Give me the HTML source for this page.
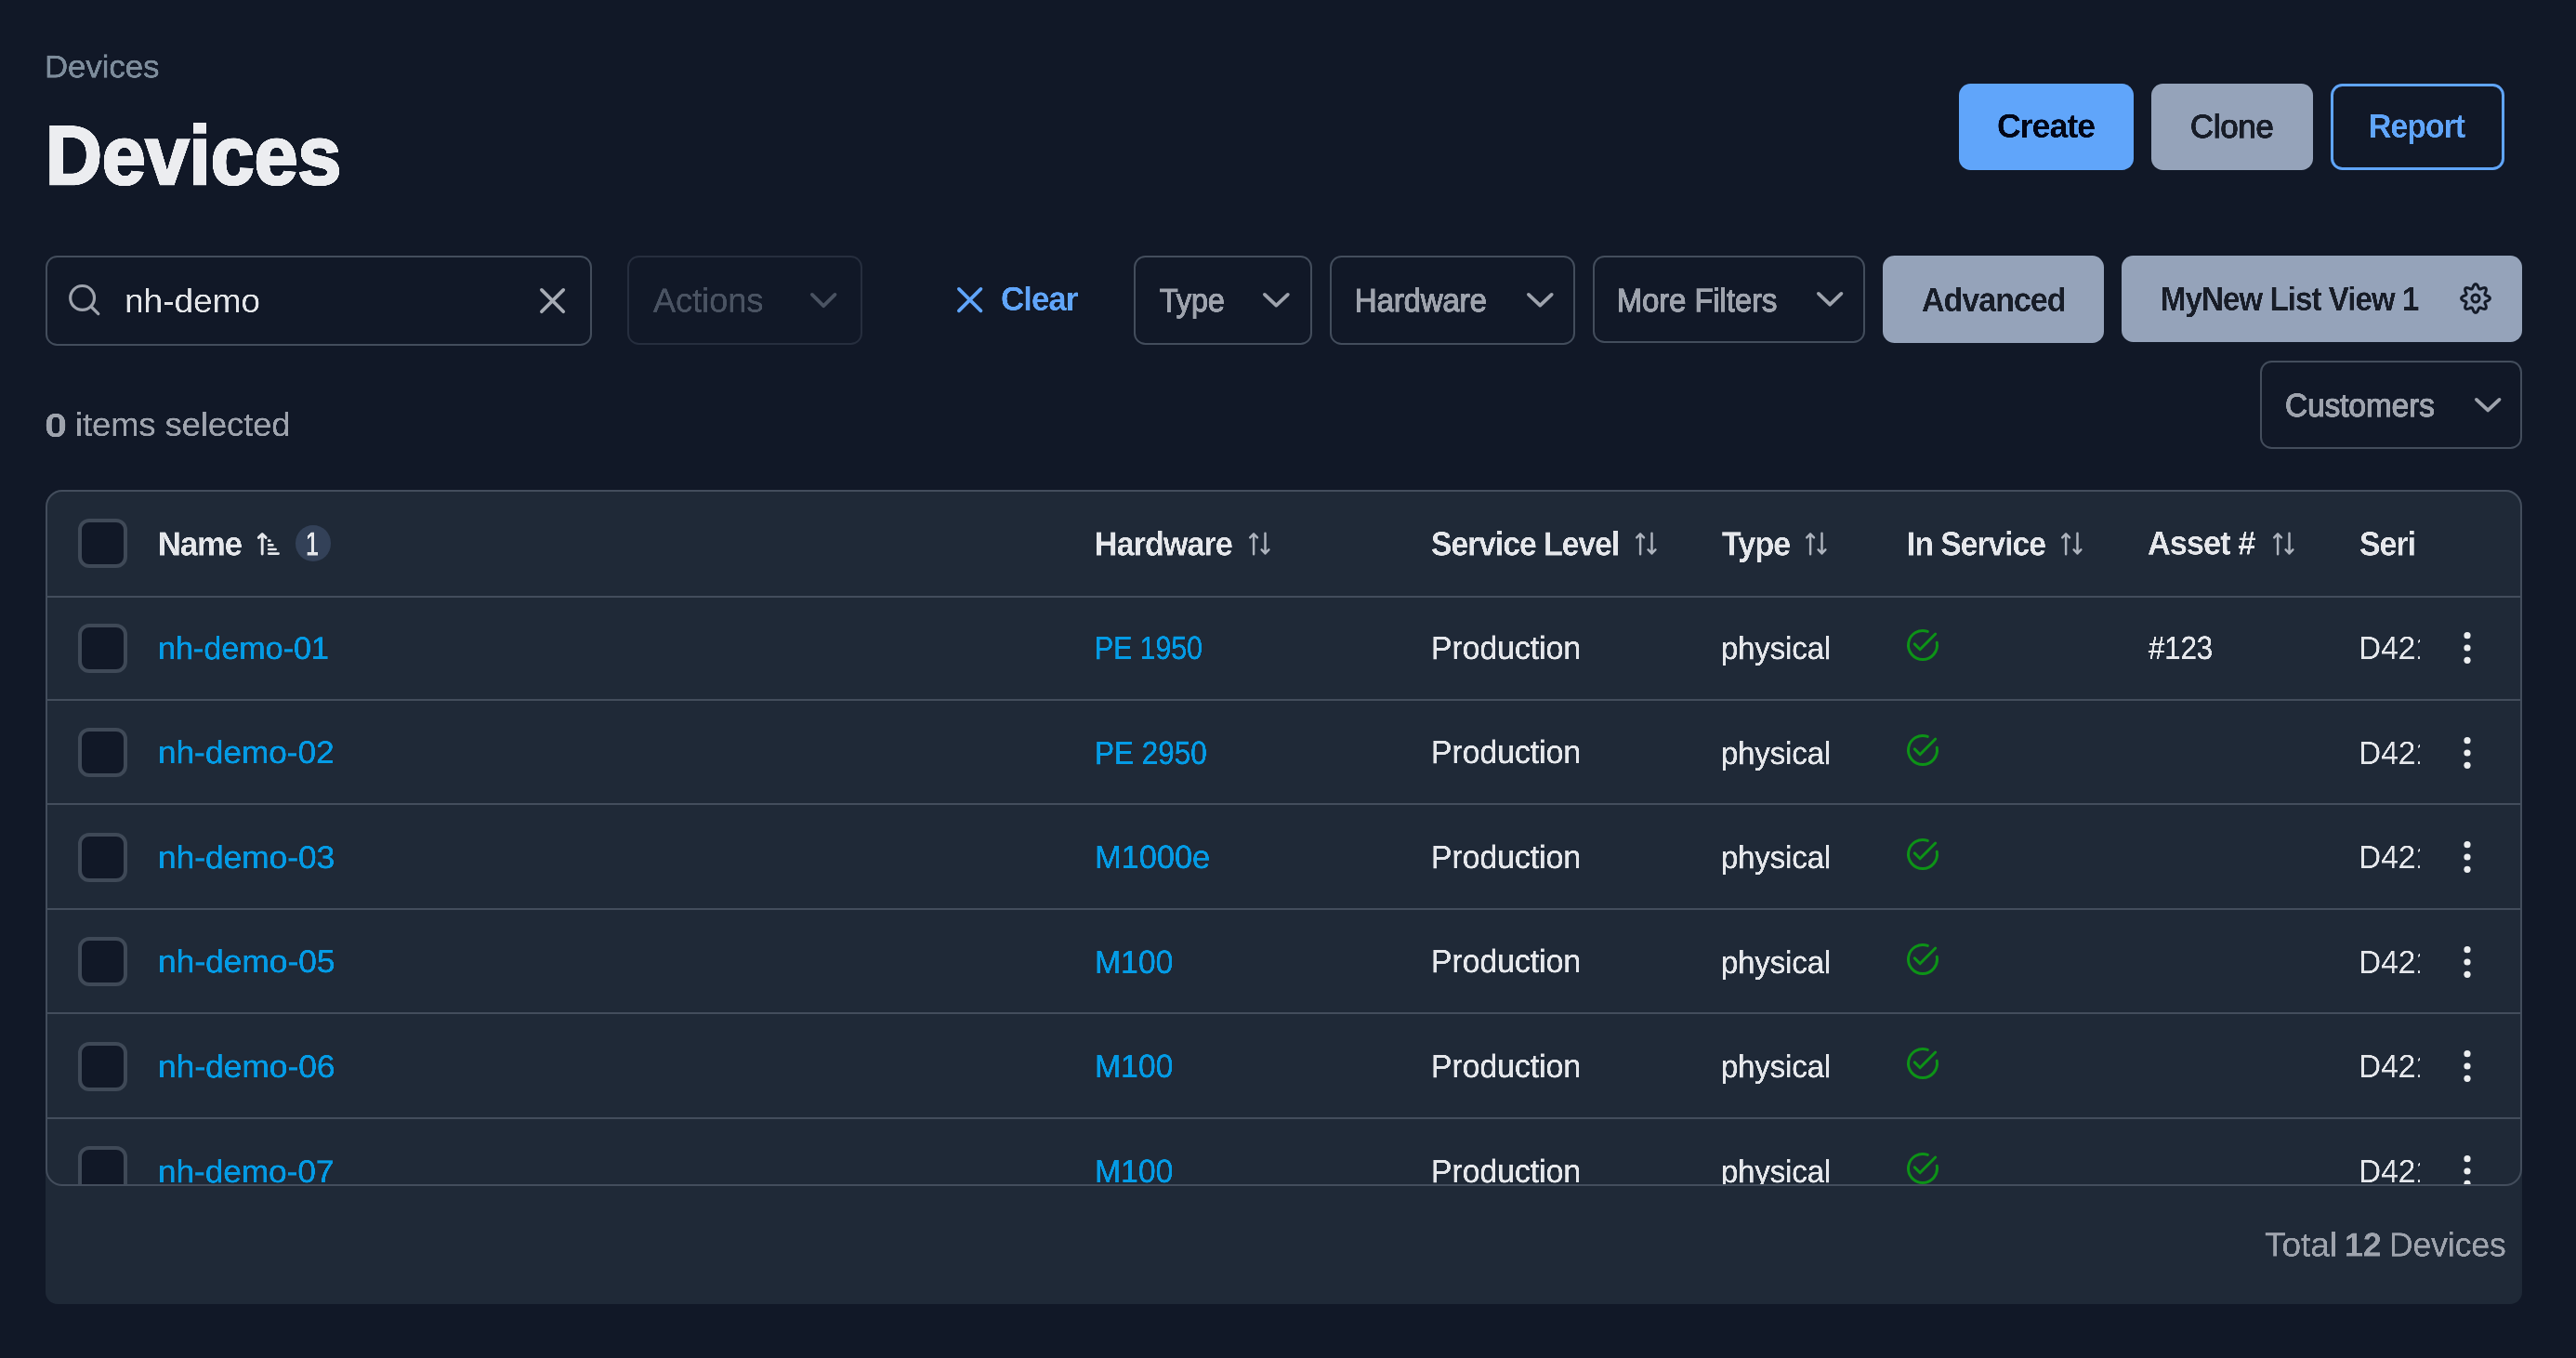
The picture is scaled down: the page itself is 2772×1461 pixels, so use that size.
<!DOCTYPE html>
<html lang="en"><head><meta charset="utf-8"><title>Devices</title>
<style>
html,body{margin:0;padding:0}
body{width:2772px;height:1461px;overflow:hidden;background:#111827;font-family:"Liberation Sans",sans-serif;position:relative}
.b{position:absolute;box-sizing:border-box;border-radius:12.5px;margin:0;padding:0;border:0;background:none;font:inherit;color:inherit;appearance:none;-webkit-appearance:none;display:block;overflow:visible;text-align:left}
h1,p,nav,header{margin:0;padding:0;font-size:inherit;font-weight:inherit}
.t{position:absolute;white-space:nowrap;transform-origin:0 0;display:block;will-change:transform}
.i{position:absolute;display:block;overflow:visible}
.dd{border:2px solid #434d5c}
.panel{position:absolute;left:49px;top:527px;width:2665px;height:876px;background:#1f2937;border-radius:18px 18px 13px 13px}
.tbl{position:absolute;left:0;top:0;width:2665px;height:749px;box-sizing:border-box;border:2px solid #434d5c;border-radius:18px;overflow:hidden}
.row{position:absolute;left:0;width:2661px;box-sizing:border-box;border-bottom:2px solid #434d5c}
.cb{position:absolute;box-sizing:border-box;width:53px;height:53px;border:4px solid #3f4957;border-radius:12px;background:#111827}
.clip{position:absolute;overflow:hidden}
</style></head><body>
<header>
<nav aria-label="Breadcrumb"><span class="t" style="left:48.00px;top:51.00px;font-size:135.5px;line-height:164px;font-weight:400;color:#7d8c9b;-webkit-text-stroke:2.40px #7d8c9b;transform:scale(0.25608,0.25)">Devices</span></nav>
<h1><span class="t" style="left:49.00px;top:113.00px;font-size:357.6px;line-height:432px;font-weight:700;color:#ecedf0;-webkit-text-stroke:11.20px #ecedf0;transform:scale(0.23536,0.25)">Devices</span></h1>
<div class="actions">
<button class="b" type="button" style="left:2108px;top:90px;width:188px;height:93px;background:#60a5fa"><span class="t" style="left:41.00px;top:24.00px;font-size:142.4px;line-height:172px;font-weight:700;color:#020617;letter-spacing:-3.99px;transform:scale(0.25047,0.25)">Create</span></button>
<button class="b" type="button" style="left:2315px;top:90px;width:174px;height:93px;background:#95a3ba"><span class="t" style="left:42.00px;top:25.00px;font-size:138.4px;line-height:168px;font-weight:400;color:#181d28;-webkit-text-stroke:4.80px #181d28;transform:scale(0.24798,0.25)">Clone</span></button>
<button class="b" type="button" style="left:2508px;top:90px;width:187px;height:93px;border:3px solid #60a5fa"><span class="t" style="left:38.00px;top:21.00px;font-size:142.4px;line-height:172px;font-weight:700;color:#60a5fa;letter-spacing:-3.99px;transform:scale(0.23701,0.25)">Report</span></button>
</div></header>
<div class="toolbar">
<label class="b dd"  style="left:49px;top:275px;width:588px;height:97px;"><svg class="i" style="left:19.80px;top:26.20px" width="40" height="40" viewBox="-3 -3 40 40"><g fill="none" stroke="#9ea3ad" stroke-width="3.2" stroke-linecap="round"><circle cx="14.6" cy="14.4" r="12.9"/><path d="M24.2 24 L31.8 31.6"/></g></svg><span class="t" style="left:83.00px;top:25.00px;font-size:141.6px;line-height:172px;font-weight:400;color:#e3e5e8;transform:scale(0.26120,0.25)">nh-demo</span><svg class="i" style="left:526.20px;top:28.90px" width="35.10" height="35.10" viewBox="-4 -4 35.10 35.10"><path d="M1.85 1.85 L25.25 25.25 M25.25 1.85 L1.85 25.25" fill="none" stroke="#a6abb4" stroke-width="3.7" stroke-linecap="round"/></svg></label>
<button class="b" type="button" disabled style="left:675px;top:275px;width:253px;height:96px;border:2px solid #262e3e"><span class="t" style="left:26.00px;top:24.00px;font-size:144.8px;line-height:176px;font-weight:400;color:#4a5362;-webkit-text-stroke:1.60px #4a5362;transform:scale(0.24930,0.25)">Actions</span><svg class="i" style="left:190.50px;top:33.70px" width="36.40" height="24.80" viewBox="-4 -4 36.40 24.80"><path d="M1.90 1.90 L14.20 14.14 L26.50 1.90" fill="none" stroke="#4a5362" stroke-width="3.8" stroke-linecap="round" stroke-linejoin="round"/></svg></button>
<button class="b" type="button" style="left:1020px;top:290px;width:150px;height:65px;"><svg class="i" style="left:5.80px;top:14.80px" width="35.30" height="35.20" viewBox="-4 -4 35.30 35.20"><path d="M1.85 1.85 L25.45 25.35 M25.45 1.85 L1.85 25.35" fill="none" stroke="#60a5fa" stroke-width="3.7" stroke-linecap="round"/></svg><span class="t" style="left:57.00px;top:10.00px;font-size:142.4px;line-height:172px;font-weight:700;color:#60a5fa;letter-spacing:-3.99px;transform:scale(0.24515,0.25)">Clear</span></button>
<button class="b dd" type="button" style="left:1220px;top:275px;width:192px;height:95.5px;"><span class="t" style="left:26.00px;top:25.00px;font-size:138.4px;line-height:168px;font-weight:400;color:#9ea3ad;-webkit-text-stroke:4.80px #9ea3ad;transform:scale(0.23240,0.25)">Type</span><svg class="i" style="left:133.40px;top:34.00px" width="36.70" height="24.20" viewBox="-4 -4 36.70 24.20"><path d="M1.90 1.90 L14.35 13.54 L26.80 1.90" fill="none" stroke="#9ea3ad" stroke-width="3.8" stroke-linecap="round" stroke-linejoin="round"/></svg></button>
<button class="b dd" type="button" style="left:1431px;top:275px;width:263.5px;height:95.5px;"><span class="t" style="left:25.00px;top:25.00px;font-size:138.4px;line-height:168px;font-weight:400;color:#9ea3ad;-webkit-text-stroke:4.80px #9ea3ad;transform:scale(0.23637,0.25)">Hardware</span><svg class="i" style="left:205.90px;top:34.00px" width="36.60" height="24.20" viewBox="-4 -4 36.60 24.20"><path d="M1.90 1.90 L14.30 13.54 L26.70 1.90" fill="none" stroke="#9ea3ad" stroke-width="3.8" stroke-linecap="round" stroke-linejoin="round"/></svg></button>
<button class="b dd" type="button" style="left:1713.5px;top:275px;width:293.5px;height:93.5px;"><span class="t" style="left:24.00px;top:25.00px;font-size:138.4px;line-height:168px;font-weight:400;color:#9ea3ad;-webkit-text-stroke:4.80px #9ea3ad;transform:scale(0.23588,0.25)">More Filters</span><svg class="i" style="left:235.40px;top:33.10px" width="36.30" height="24.30" viewBox="-4 -4 36.30 24.30"><path d="M1.90 1.90 L14.15 13.64 L26.40 1.90" fill="none" stroke="#9ea3ad" stroke-width="3.8" stroke-linecap="round" stroke-linejoin="round"/></svg></button>
<button class="b" type="button" style="left:2026px;top:275px;width:238px;height:93.7px;background:#95a3ba"><span class="t" style="left:42.00px;top:26.00px;font-size:142.4px;line-height:172px;font-weight:700;color:#181d28;letter-spacing:-3.99px;transform:scale(0.23834,0.25)">Advanced</span></button>
<button class="b" type="button" style="left:2283px;top:275px;width:431px;height:92.7px;background:#95a3ba"><span class="t" style="left:42.00px;top:25.00px;font-size:142.4px;line-height:172px;font-weight:700;color:#181d28;letter-spacing:-3.99px;transform:scale(0.23206,0.25)">MyNew List View 1</span><svg class="i" style="left:361.00px;top:26.10px" width="40" height="40" viewBox="0 0 40 40"><g fill="none" stroke="#141b29" stroke-width="3" stroke-linejoin="round"><path d="M35.40 20.00 L35.28 20.60 L34.91 21.17 L34.35 21.70 L33.64 22.16 L32.85 22.56 L32.05 22.89 L31.31 23.19 L30.69 23.47 L30.24 23.78 L29.98 24.13 L29.91 24.57 L30.01 25.10 L30.25 25.74 L30.56 26.47 L30.89 27.28 L31.17 28.12 L31.35 28.95 L31.38 29.72 L31.23 30.38 L30.89 30.89 L30.38 31.23 L29.72 31.38 L28.95 31.35 L28.12 31.17 L27.28 30.89 L26.47 30.56 L25.74 30.25 L25.10 30.01 L24.57 29.91 L24.13 29.98 L23.78 30.24 L23.47 30.69 L23.19 31.31 L22.89 32.05 L22.56 32.85 L22.16 33.64 L21.70 34.35 L21.17 34.91 L20.60 35.28 L20.00 35.40 L19.40 35.28 L18.83 34.91 L18.30 34.35 L17.84 33.64 L17.44 32.85 L17.11 32.05 L16.81 31.31 L16.53 30.69 L16.22 30.24 L15.87 29.98 L15.43 29.91 L14.90 30.01 L14.26 30.25 L13.53 30.56 L12.72 30.89 L11.88 31.17 L11.05 31.35 L10.28 31.38 L9.62 31.23 L9.11 30.89 L8.77 30.38 L8.62 29.72 L8.65 28.95 L8.83 28.12 L9.11 27.28 L9.44 26.47 L9.75 25.74 L9.99 25.10 L10.09 24.57 L10.02 24.13 L9.76 23.78 L9.31 23.47 L8.69 23.19 L7.95 22.89 L7.15 22.56 L6.36 22.16 L5.65 21.70 L5.09 21.17 L4.72 20.60 L4.60 20.00 L4.72 19.40 L5.09 18.83 L5.65 18.30 L6.36 17.84 L7.15 17.44 L7.95 17.11 L8.69 16.81 L9.31 16.53 L9.76 16.22 L10.02 15.87 L10.09 15.43 L9.99 14.90 L9.75 14.26 L9.44 13.53 L9.11 12.72 L8.83 11.88 L8.65 11.05 L8.62 10.28 L8.77 9.62 L9.11 9.11 L9.62 8.77 L10.28 8.62 L11.05 8.65 L11.88 8.83 L12.72 9.11 L13.53 9.44 L14.26 9.75 L14.90 9.99 L15.43 10.09 L15.87 10.02 L16.22 9.76 L16.53 9.31 L16.81 8.69 L17.11 7.95 L17.44 7.15 L17.84 6.36 L18.30 5.65 L18.83 5.09 L19.40 4.72 L20.00 4.60 L20.60 4.72 L21.17 5.09 L21.70 5.65 L22.16 6.36 L22.56 7.15 L22.89 7.95 L23.19 8.69 L23.47 9.31 L23.78 9.76 L24.13 10.02 L24.57 10.09 L25.10 9.99 L25.74 9.75 L26.47 9.44 L27.28 9.11 L28.12 8.83 L28.95 8.65 L29.72 8.62 L30.38 8.77 L30.89 9.11 L31.23 9.62 L31.38 10.28 L31.35 11.05 L31.17 11.88 L30.89 12.72 L30.56 13.53 L30.25 14.26 L30.01 14.90 L29.91 15.43 L29.98 15.87 L30.24 16.22 L30.69 16.53 L31.31 16.81 L32.05 17.11 L32.85 17.44 L33.64 17.84 L34.35 18.30 L34.91 18.83 L35.28 19.40Z"/><circle cx="20" cy="20" r="4.05"/></g></svg></button>
<button class="b dd" type="button" style="left:2432px;top:388px;width:282px;height:95px;"><span class="t" style="left:25.00px;top:25.00px;font-size:138.4px;line-height:168px;font-weight:400;color:#9ea3ad;-webkit-text-stroke:4.80px #9ea3ad;transform:scale(0.24051,0.25)">Customers</span><svg class="i" style="left:224.60px;top:33.80px" width="36.40" height="24.10" viewBox="-4 -4 36.40 24.10"><path d="M1.90 1.90 L14.20 13.44 L26.50 1.90" fill="none" stroke="#9ea3ad" stroke-width="3.8" stroke-linecap="round" stroke-linejoin="round"/></svg></button>
<p class="sel"><span class="t" style="left:48.00px;top:436.00px;font-size:143.2px;line-height:172px;font-weight:700;color:#9ea3ad;transform:scale(0.30258,0.25)">0</span><span class="t" style="left:81.00px;top:435.00px;font-size:141.6px;line-height:172px;font-weight:400;color:#9ea3ad;-webkit-text-stroke:1.20px #9ea3ad;transform:scale(0.25575,0.25)">items selected</span></p>
</div>
<section class="panel">
<div class="tbl" role="table">
<div class="row head" role="row" style="top:0.00px;height:114.00px"><span class="cb" role="checkbox" aria-checked="false" style="left:33.00px;top:29.00px"></span><span class="t" style="left:119.00px;top:34.00px;font-size:145.3px;line-height:176px;font-weight:700;color:#e5e7eb;letter-spacing:-4.07px;transform:scale(0.23706,0.25)">Name</span><svg class="i" style="left:223.20px;top:41.20px" width="32" height="32" viewBox="-3 -3 32 32"><g fill="none" stroke="#e5e7eb" stroke-linecap="round" stroke-linejoin="round"><path stroke-width="2.9" d="M5.2 23 V1.6 M1.3 5.4 L5.2 1.5 L9.1 5.4"/><path stroke-width="2.7" d="M12.2 8.7 H13.4 M12.2 13.4 H16.4 M12.2 18 H19.6 M12.2 22.6 H22.6"/></g></svg><span class="b badge" style="left:266.70px;top:36.00px;width:38.6px;height:38.6px;border-radius:50%;background:#334158"></span><span class="t" style="left:278.00px;top:34.00px;font-size:145.3px;line-height:176px;font-weight:700;color:#e5e7eb;letter-spacing:-4.07px;transform:scale(0.16823,0.25)">1</span><span class="t" style="left:1127.00px;top:34.00px;font-size:145.3px;line-height:176px;font-weight:700;color:#e5e7eb;letter-spacing:-4.07px;transform:scale(0.23474,0.25)">Hardware</span><svg class="i" style="left:1289.80px;top:41.10px" width="30" height="30" viewBox="-3 -3 30 30"><g fill="none" stroke="#adb3bd" stroke-width="2.45" stroke-linecap="round" stroke-linejoin="round"><path d="M5.1 23.2 V1.4 M1.2 5.4 L5.1 1.4 L9 5.4"/><path d="M17.5 0.6 V22.4 M13.6 18.4 L17.5 22.4 L21.4 18.4"/></g></svg><span class="t" style="left:1489.00px;top:34.00px;font-size:145.3px;line-height:176px;font-weight:700;color:#e5e7eb;letter-spacing:-4.07px;transform:scale(0.23083,0.25)">Service Level</span><svg class="i" style="left:1705.90px;top:41.10px" width="30" height="30" viewBox="-3 -3 30 30"><g fill="none" stroke="#adb3bd" stroke-width="2.45" stroke-linecap="round" stroke-linejoin="round"><path d="M5.1 23.2 V1.4 M1.2 5.4 L5.1 1.4 L9 5.4"/><path d="M17.5 0.6 V22.4 M13.6 18.4 L17.5 22.4 L21.4 18.4"/></g></svg><span class="t" style="left:1802.00px;top:34.00px;font-size:145.3px;line-height:176px;font-weight:700;color:#e5e7eb;letter-spacing:-4.07px;transform:scale(0.23442,0.25)">Type</span><svg class="i" style="left:1889.20px;top:41.10px" width="30" height="30" viewBox="-3 -3 30 30"><g fill="none" stroke="#adb3bd" stroke-width="2.45" stroke-linecap="round" stroke-linejoin="round"><path d="M5.1 23.2 V1.4 M1.2 5.4 L5.1 1.4 L9 5.4"/><path d="M17.5 0.6 V22.4 M13.6 18.4 L17.5 22.4 L21.4 18.4"/></g></svg><span class="t" style="left:2001.00px;top:34.00px;font-size:145.3px;line-height:176px;font-weight:700;color:#e5e7eb;letter-spacing:-4.07px;transform:scale(0.23069,0.25)">In Service</span><svg class="i" style="left:2164.00px;top:41.10px" width="30" height="30" viewBox="-3 -3 30 30"><g fill="none" stroke="#adb3bd" stroke-width="2.45" stroke-linecap="round" stroke-linejoin="round"><path d="M5.1 23.2 V1.4 M1.2 5.4 L5.1 1.4 L9 5.4"/><path d="M17.5 0.6 V22.4 M13.6 18.4 L17.5 22.4 L21.4 18.4"/></g></svg><span class="t" style="left:2260.00px;top:33.00px;font-size:145.3px;line-height:176px;font-weight:700;color:#e5e7eb;letter-spacing:-4.07px;transform:scale(0.23597,0.25)">Asset #</span><svg class="i" style="left:2391.50px;top:41.10px" width="30" height="30" viewBox="-3 -3 30 30"><g fill="none" stroke="#adb3bd" stroke-width="2.45" stroke-linecap="round" stroke-linejoin="round"><path d="M5.1 23.2 V1.4 M1.2 5.4 L5.1 1.4 L9 5.4"/><path d="M17.5 0.6 V22.4 M13.6 18.4 L17.5 22.4 L21.4 18.4"/></g></svg><div class="clip" style="left:2479.00px;top:31.00px;width:68.9px;height:60px"><span class="t" style="left:9.00px;top:3.00px;font-size:145.3px;line-height:176px;font-weight:700;color:#e5e7eb;letter-spacing:-4.07px;transform:scale(0.23228,0.25)">Serial #</span></div></div>
<div class="row" role="row" style="top:114.00px;height:110.70px"><span class="cb" role="checkbox" aria-checked="false" style="left:33.00px;top:27.70px"></span><a class="t" style="left:119.00px;top:34.00px;font-size:135.2px;line-height:164px;font-weight:400;color:#049be5;-webkit-text-stroke:2.00px #049be5;transform:scale(0.25237,0.25)">nh-demo-01</a><a class="t" style="left:1127.00px;top:33.00px;font-size:138.4px;line-height:168px;font-weight:400;color:#049be5;-webkit-text-stroke:2.00px #049be5;transform:scale(0.21830,0.25)">PE 1950</a><span class="t" style="left:1489.00px;top:33.00px;font-size:138.4px;line-height:168px;font-weight:400;color:#e5e7eb;-webkit-text-stroke:2.00px #e5e7eb;transform:scale(0.24353,0.25)">Production</span><span class="t" style="left:1801.00px;top:34.00px;font-size:135.2px;line-height:164px;font-weight:400;color:#e5e7eb;-webkit-text-stroke:2.00px #e5e7eb;transform:scale(0.24200,0.25)">physical</span><span class="t" style="left:2261.00px;top:33.00px;font-size:138.4px;line-height:168px;font-weight:400;color:#e5e7eb;-webkit-text-stroke:2.00px #e5e7eb;transform:scale(0.22462,0.25)">#123</span><svg class="i" style="left:1998.20px;top:31.30px" width="40" height="40" viewBox="0 0 40 40"><g fill="none" stroke="#0d9317" stroke-width="3.0" stroke-linecap="round" stroke-linejoin="round"><path d="M25.30 5.43 A15.5 15.5 0 1 0 35.26 17.31"/><path d="M11.30 18.90 L17.10 24.80 L33.70 8.00"/></g></svg><div class="clip" style="left:2479.00px;top:24.20px;width:74px;height:60px"><span class="t" style="left:8.00px;top:9.00px;font-size:138.4px;line-height:168px;font-weight:400;color:#e5e7eb;transform:scale(0.24125,0.25)">D421TG1</span></div><svg class="i" style="left:2597.70px;top:34.20px" width="12" height="40" viewBox="0 0 12 40"><g fill="#eceef0"><circle cx="6" cy="6.7" r="3.6"/><circle cx="6" cy="20" r="3.6"/><circle cx="6" cy="33.3" r="3.6"/></g></svg></div>
<div class="row" role="row" style="top:224.70px;height:112.50px"><span class="cb" role="checkbox" aria-checked="false" style="left:33.00px;top:29.50px"></span><a class="t" style="left:119.00px;top:35.00px;font-size:135.2px;line-height:164px;font-weight:400;color:#049be5;-webkit-text-stroke:2.00px #049be5;transform:scale(0.26015,0.25)">nh-demo-02</a><a class="t" style="left:1127.00px;top:35.00px;font-size:138.4px;line-height:168px;font-weight:400;color:#049be5;-webkit-text-stroke:2.00px #049be5;transform:scale(0.22740,0.25)">PE 2950</a><span class="t" style="left:1489.00px;top:34.00px;font-size:138.4px;line-height:168px;font-weight:400;color:#e5e7eb;-webkit-text-stroke:2.00px #e5e7eb;transform:scale(0.24353,0.25)">Production</span><span class="t" style="left:1801.00px;top:36.00px;font-size:135.2px;line-height:164px;font-weight:400;color:#e5e7eb;-webkit-text-stroke:2.00px #e5e7eb;transform:scale(0.24200,0.25)">physical</span><svg class="i" style="left:1998.20px;top:33.10px" width="40" height="40" viewBox="0 0 40 40"><g fill="none" stroke="#0d9317" stroke-width="3.0" stroke-linecap="round" stroke-linejoin="round"><path d="M25.30 5.43 A15.5 15.5 0 1 0 35.26 17.31"/><path d="M11.30 18.90 L17.10 24.80 L33.70 8.00"/></g></svg><div class="clip" style="left:2479.00px;top:26.00px;width:74px;height:60px"><span class="t" style="left:8.00px;top:9.00px;font-size:138.4px;line-height:168px;font-weight:400;color:#e5e7eb;transform:scale(0.24125,0.25)">D421TG1</span></div><svg class="i" style="left:2597.70px;top:36.00px" width="12" height="40" viewBox="0 0 12 40"><g fill="#eceef0"><circle cx="6" cy="6.7" r="3.6"/><circle cx="6" cy="20" r="3.6"/><circle cx="6" cy="33.3" r="3.6"/></g></svg></div>
<div class="row" role="row" style="top:337.20px;height:112.50px"><span class="cb" role="checkbox" aria-checked="false" style="left:33.00px;top:29.50px"></span><a class="t" style="left:119.00px;top:36.00px;font-size:135.2px;line-height:164px;font-weight:400;color:#049be5;-webkit-text-stroke:2.00px #049be5;transform:scale(0.26094,0.25)">nh-demo-03</a><a class="t" style="left:1127.00px;top:35.00px;font-size:138.4px;line-height:168px;font-weight:400;color:#049be5;-webkit-text-stroke:2.00px #049be5;transform:scale(0.24836,0.25)">M1000e</a><span class="t" style="left:1489.00px;top:35.00px;font-size:138.4px;line-height:168px;font-weight:400;color:#e5e7eb;-webkit-text-stroke:2.00px #e5e7eb;transform:scale(0.24353,0.25)">Production</span><span class="t" style="left:1801.00px;top:36.00px;font-size:135.2px;line-height:164px;font-weight:400;color:#e5e7eb;-webkit-text-stroke:2.00px #e5e7eb;transform:scale(0.24200,0.25)">physical</span><svg class="i" style="left:1998.20px;top:33.10px" width="40" height="40" viewBox="0 0 40 40"><g fill="none" stroke="#0d9317" stroke-width="3.0" stroke-linecap="round" stroke-linejoin="round"><path d="M25.30 5.43 A15.5 15.5 0 1 0 35.26 17.31"/><path d="M11.30 18.90 L17.10 24.80 L33.70 8.00"/></g></svg><div class="clip" style="left:2479.00px;top:26.00px;width:74px;height:60px"><span class="t" style="left:8.00px;top:9.00px;font-size:138.4px;line-height:168px;font-weight:400;color:#e5e7eb;transform:scale(0.24125,0.25)">D421TG1</span></div><svg class="i" style="left:2597.70px;top:36.00px" width="12" height="40" viewBox="0 0 12 40"><g fill="#eceef0"><circle cx="6" cy="6.7" r="3.6"/><circle cx="6" cy="20" r="3.6"/><circle cx="6" cy="33.3" r="3.6"/></g></svg></div>
<div class="row" role="row" style="top:449.70px;height:112.50px"><span class="cb" role="checkbox" aria-checked="false" style="left:33.00px;top:29.50px"></span><a class="t" style="left:119.00px;top:35.00px;font-size:135.2px;line-height:164px;font-weight:400;color:#049be5;-webkit-text-stroke:2.00px #049be5;transform:scale(0.26130,0.25)">nh-demo-05</a><a class="t" style="left:1127.00px;top:35.00px;font-size:138.4px;line-height:168px;font-weight:400;color:#049be5;-webkit-text-stroke:2.00px #049be5;transform:scale(0.24374,0.25)">M100</a><span class="t" style="left:1489.00px;top:34.00px;font-size:138.4px;line-height:168px;font-weight:400;color:#e5e7eb;-webkit-text-stroke:2.00px #e5e7eb;transform:scale(0.24353,0.25)">Production</span><span class="t" style="left:1801.00px;top:36.00px;font-size:135.2px;line-height:164px;font-weight:400;color:#e5e7eb;-webkit-text-stroke:2.00px #e5e7eb;transform:scale(0.24200,0.25)">physical</span><svg class="i" style="left:1998.20px;top:33.10px" width="40" height="40" viewBox="0 0 40 40"><g fill="none" stroke="#0d9317" stroke-width="3.0" stroke-linecap="round" stroke-linejoin="round"><path d="M25.30 5.43 A15.5 15.5 0 1 0 35.26 17.31"/><path d="M11.30 18.90 L17.10 24.80 L33.70 8.00"/></g></svg><div class="clip" style="left:2479.00px;top:26.00px;width:74px;height:60px"><span class="t" style="left:8.00px;top:9.00px;font-size:138.4px;line-height:168px;font-weight:400;color:#e5e7eb;transform:scale(0.24125,0.25)">D421TG1</span></div><svg class="i" style="left:2597.70px;top:36.00px" width="12" height="40" viewBox="0 0 12 40"><g fill="#eceef0"><circle cx="6" cy="6.7" r="3.6"/><circle cx="6" cy="20" r="3.6"/><circle cx="6" cy="33.3" r="3.6"/></g></svg></div>
<div class="row" role="row" style="top:562.20px;height:112.50px"><span class="cb" role="checkbox" aria-checked="false" style="left:33.00px;top:29.50px"></span><a class="t" style="left:119.00px;top:36.00px;font-size:135.2px;line-height:164px;font-weight:400;color:#049be5;-webkit-text-stroke:2.00px #049be5;transform:scale(0.26136,0.25)">nh-demo-06</a><a class="t" style="left:1127.00px;top:35.00px;font-size:138.4px;line-height:168px;font-weight:400;color:#049be5;-webkit-text-stroke:2.00px #049be5;transform:scale(0.24374,0.25)">M100</a><span class="t" style="left:1489.00px;top:35.00px;font-size:138.4px;line-height:168px;font-weight:400;color:#e5e7eb;-webkit-text-stroke:2.00px #e5e7eb;transform:scale(0.24353,0.25)">Production</span><span class="t" style="left:1801.00px;top:36.00px;font-size:135.2px;line-height:164px;font-weight:400;color:#e5e7eb;-webkit-text-stroke:2.00px #e5e7eb;transform:scale(0.24200,0.25)">physical</span><svg class="i" style="left:1998.20px;top:33.10px" width="40" height="40" viewBox="0 0 40 40"><g fill="none" stroke="#0d9317" stroke-width="3.0" stroke-linecap="round" stroke-linejoin="round"><path d="M25.30 5.43 A15.5 15.5 0 1 0 35.26 17.31"/><path d="M11.30 18.90 L17.10 24.80 L33.70 8.00"/></g></svg><div class="clip" style="left:2479.00px;top:26.00px;width:74px;height:60px"><span class="t" style="left:8.00px;top:9.00px;font-size:138.4px;line-height:168px;font-weight:400;color:#e5e7eb;transform:scale(0.24125,0.25)">D421TG1</span></div><svg class="i" style="left:2597.70px;top:36.00px" width="12" height="40" viewBox="0 0 12 40"><g fill="#eceef0"><circle cx="6" cy="6.7" r="3.6"/><circle cx="6" cy="20" r="3.6"/><circle cx="6" cy="33.3" r="3.6"/></g></svg></div>
<div class="row" role="row" style="top:674.70px;height:112.50px"><span class="cb" role="checkbox" aria-checked="false" style="left:33.00px;top:29.50px"></span><a class="t" style="left:119.00px;top:36.00px;font-size:135.2px;line-height:164px;font-weight:400;color:#049be5;-webkit-text-stroke:2.00px #049be5;transform:scale(0.25987,0.25)">nh-demo-07</a><a class="t" style="left:1127.00px;top:35.00px;font-size:138.4px;line-height:168px;font-weight:400;color:#049be5;-webkit-text-stroke:2.00px #049be5;transform:scale(0.24374,0.25)">M100</a><span class="t" style="left:1489.00px;top:35.00px;font-size:138.4px;line-height:168px;font-weight:400;color:#e5e7eb;-webkit-text-stroke:2.00px #e5e7eb;transform:scale(0.24353,0.25)">Production</span><span class="t" style="left:1801.00px;top:36.00px;font-size:135.2px;line-height:164px;font-weight:400;color:#e5e7eb;-webkit-text-stroke:2.00px #e5e7eb;transform:scale(0.24200,0.25)">physical</span><svg class="i" style="left:1998.20px;top:33.10px" width="40" height="40" viewBox="0 0 40 40"><g fill="none" stroke="#0d9317" stroke-width="3.0" stroke-linecap="round" stroke-linejoin="round"><path d="M25.30 5.43 A15.5 15.5 0 1 0 35.26 17.31"/><path d="M11.30 18.90 L17.10 24.80 L33.70 8.00"/></g></svg><div class="clip" style="left:2479.00px;top:26.00px;width:74px;height:60px"><span class="t" style="left:8.00px;top:9.00px;font-size:138.4px;line-height:168px;font-weight:400;color:#e5e7eb;transform:scale(0.24125,0.25)">D421TG1</span></div><svg class="i" style="left:2597.70px;top:36.00px" width="12" height="40" viewBox="0 0 12 40"><g fill="#eceef0"><circle cx="6" cy="6.7" r="3.6"/><circle cx="6" cy="20" r="3.6"/><circle cx="6" cy="33.3" r="3.6"/></g></svg></div>
</div>
<footer><span class="t" style="left:2388.00px;top:790.00px;font-size:145.3px;line-height:176px;font-weight:400;color:#9ea3ad;-webkit-text-stroke:1.20px #9ea3ad;transform:scale(0.25433,0.25)">Total</span><span class="t" style="left:2474.00px;top:790.00px;font-size:145.3px;line-height:176px;font-weight:700;color:#9ea3ad;transform:scale(0.24592,0.25)">12</span><span class="t" style="left:2522.00px;top:790.00px;font-size:145.3px;line-height:176px;font-weight:400;color:#9ea3ad;-webkit-text-stroke:1.20px #9ea3ad;transform:scale(0.24331,0.25)">Devices</span></footer>
</section>
</body></html>
